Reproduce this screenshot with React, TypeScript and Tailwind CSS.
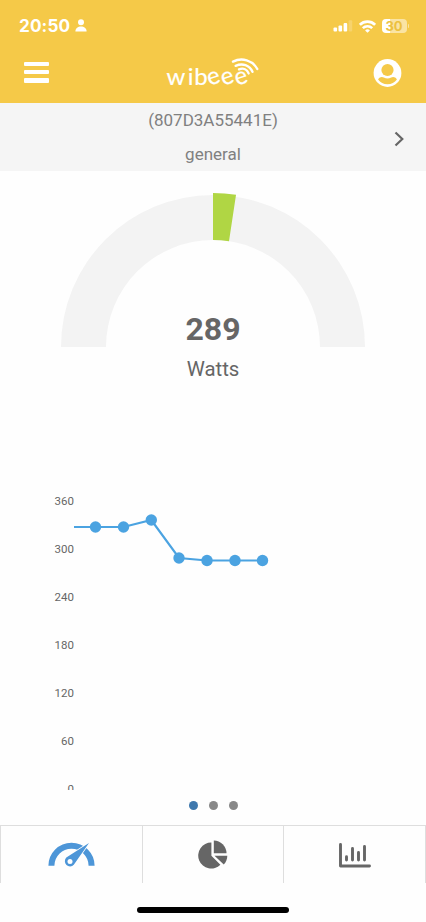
import React, { useState } from 'react';

const GAUGE = { cx: 152, cy: 154, inner: 107 };

const readings = [
  { x: 41.5, y: 37 },
  { x: 69.5, y: 37 },
  { x: 97.3, y: 30 },
  { x: 125, y: 68 },
  { x: 153, y: 70.5 },
  { x: 181, y: 70.5 },
  { x: 208.5, y: 70.5 },
];

const ticks = [360, 300, 240, 180, 120, 60, 0];

// Ring segment, angles in degrees clockwise from the top
const ringSegment = (from: number, to: number, outer: number) => {
  const point = (angle: number, r: number) => {
    const rad = (angle * Math.PI) / 180;
    return `${GAUGE.cx + r * Math.sin(rad)} ${GAUGE.cy - r * Math.cos(rad)}`;
  };
  return `M${point(from, outer)} A${outer} ${outer} 0 0 1 ${point(to, outer)} L${point(to, GAUGE.inner)} A${GAUGE.inner} ${GAUGE.inner} 0 0 0 ${point(from, GAUGE.inner)}Z`;
};

const StatusBar: React.FC = () => (
  <div className="flex h-[52px] items-center justify-between pl-[19px] pr-[17px]">
    <div className="flex items-center gap-[5px]">
      <span className="font-['Inter'] text-[17.2px] font-bold leading-5 tracking-[0.1px]">20:50</span>
      <svg className="mb-px" width="12" height="13" viewBox="0 0 12 13" fill="currentColor">
        <circle cx="6" cy="3.3" r="3" />
        <path d="M0.4 12.4C0.4 9 3 7.4 6 7.4s5.6 1.6 5.6 5z" />
      </svg>
    </div>
    <div className="flex items-center gap-[6px]">
      <svg width="20" height="12" viewBox="0 0 20 12" fill="currentColor">
        <rect x="0.5" y="7.5" width="3.6" height="4" rx="1" />
        <rect x="5.5" y="5.5" width="3.6" height="6" rx="1" />
        <rect x="10.6" y="3" width="3.6" height="8.5" rx="1" />
        <rect x="15.6" y="0.3" width="3.6" height="11.2" rx="1" opacity="0.2" />
      </svg>
      <svg width="17" height="13" viewBox="0 0 17 13" fill="none" stroke="currentColor" strokeWidth="2.6">
        <path d="M0.9 4.8a10.8 10.8 0 0 1 15.2 0" />
        <path d="M3.8 8.1a6.8 6.8 0 0 1 9.4 0" />
        <path d="M8.5 12.8 6.1 10.4a3.5 3.5 0 0 1 4.8 0z" fill="currentColor" stroke="none" />
      </svg>
      <div className="flex items-center gap-px">
        <div className="flex h-[14px] w-[25px] items-center justify-center rounded-[4px] bg-linear-to-r from-white from-30% to-white/50 to-30%">
          <span className="font-['Inter'] text-[13px] font-bold leading-none text-[#ecc13f]">30</span>
        </div>
        <div className="h-[4px] w-[1.5px] rounded-r-full bg-white/50" />
      </div>
    </div>
  </div>
);

const Logo: React.FC = () => (
  <svg className="overflow-visible" width="100" height="36" viewBox="-2 -2 100 36" fill="none" stroke="currentColor">
    <text
      x="3.4 24.8 31.2 46.4 60.2 74"
      y="27.6 27.6 27.6 28.8 28.8 28.8"
      rotate="0 0 0 -18 -18 -18"
      fill="currentColor"
      strokeWidth="0.2"
      className="font-['Lato'] text-[24px]"
    >
      wibeee
    </text>
    <g strokeWidth="2.4" strokeLinecap="round">
      <path d="M70 4.600C79 .2 89.500 3.200 94.300 12" />
      <path d="M72.600 8.800C79.500 5.800 86.500 8 89.500 14.800" />
      <path d="M76 12.400C80.500 10.600 84 12.600 85.600 16.400" />
    </g>
  </svg>
);

const Header: React.FC = () => (
  <header className="h-[103px] bg-[#f5c948] text-white">
    <StatusBar />
    <div className="flex h-[42px] items-center justify-between pl-[24px] pr-[24px]">
      <button className="mb-[2px] flex h-[21px] w-[25px] flex-col justify-between" aria-label="Menu">
        <span className="h-[4.500px] w-full rounded-[1px] bg-white" />
        <span className="h-[4.500px] w-full rounded-[1px] bg-white" />
        <span className="h-[4.500px] w-full rounded-[1px] bg-white" />
      </button>
      <Logo />
      <svg width="29" height="28" viewBox="0 0 28 28">
        <circle cx="14" cy="14" r="13.900" fill="#fff" />
        <circle cx="14" cy="11" r="6.100" fill="#f5c948" />
        <path d="M4.600 20.600C6 18 8.500 17.600 10.300 18.600c2.400 1.300 5 1.300 7.400 0 1.800-1 4.300-.6 5.700 2C21.200 23.800 18 25.300 14 25.300s-7.200-1.500-9.400-4.700z" fill="#f5c948" />
      </svg>
    </div>
  </header>
);

const DeviceBar: React.FC = () => (
  <div className="grid h-[68px] grid-cols-[1fr_auto_1fr] items-center bg-[#f5f5f5] text-[17px] leading-[34px] text-[#808080]">
    <div />
    <div className="text-center">
      <p>(807D3A55441E)</p>
      <p>general</p>
    </div>
    <svg className="mr-[20px] mt-[3px] justify-self-end" width="13" height="18" viewBox="0 0 13 18" fill="none" stroke="#666" strokeWidth="2.200">
      <path d="M2.500 2.500 9.300 9l-6.800 6.500" />
    </svg>
  </div>
);

const Gauge: React.FC = () => (
  <section className="flex flex-col items-center pt-[22px]">
    <div className="grid">
      <svg className="col-start-1 row-start-1" width="304" height="154" viewBox="0 0 304 154">
        <path d={ringSegment(-90, 90, 152)} fill="#f3f3f3" />
        <path d={ringSegment(0, 8.600, 154)} fill="#b0d644" />
      </svg>
      <span className="col-start-1 row-start-1 mb-[-1px] self-end justify-self-center text-[32px] font-bold leading-[38px] text-[#666]">289</span>
    </div>
    <span className="mb-px mt-[9px] text-[20.400px] leading-[26px] text-[#666]">Watts</span>
  </section>
);

const HistoryChart: React.FC = () => (
  <svg className="ml-[54px]" width="320" height="300" viewBox="0 0 320 300">
    <g fill="#666" textAnchor="end" className="text-[11.500px]">
      {ticks.map((tick, i) => (
        <text key={tick} x="20" y={15 + i * 48}>{tick}</text>
      ))}
    </g>
    <polyline
      points={['20,37', ...readings.map(p => `${p.x},${p.y}`)].join(' ')}
      fill="none"
      stroke="#4ba3e1"
      strokeWidth="2.200"
    />
    {readings.map(p => (
      <circle key={p.x} cx={p.x} cy={p.y} r="5.700" fill="#4ba3e1" />
    ))}
  </svg>
);

const GaugeIcon: React.FC = () => (
  <svg width="47" height="26" viewBox="0 0 47 26">
    <path d="M3.400 23.800a20.100 20.100 0 0 1 40.200 0" fill="none" stroke="#4d96d8" strokeWidth="6" />
    <path d="M41 1 25.800 22.800a5 5 0 1 1-7.500-7.200z" fill="#4d96d8" stroke="#fefefe" strokeWidth="1.600" className="[paint-order:stroke]" />
    <circle cx="22" cy="19.600" r="2.500" fill="#fefefe" />
  </svg>
);

const PieIcon: React.FC = () => (
  <svg width="30" height="29" viewBox="0 0 30 29" fill="#666">
    <path d="M13.400 2.600v13.200l9 9A13 13 0 1 1 13.400 2.600z" />
    <path d="M15.800.5A13 13 0 0 1 28.500 13.300H15.800z" />
    <path d="M16.500 15.700h12.800c0 3.400-1.300 6.500-3.500 8.900z" />
  </svg>
);

const BarsIcon: React.FC = () => (
  <svg width="34" height="26" viewBox="0 0 34 26" fill="none" stroke="#666" strokeWidth="2.900" strokeLinecap="round" strokeLinejoin="round">
    <path d="M2.500 2.500v21.500h29" />
    <path d="M8.500 14.700v3.300M14.500 6.500V18M20.500 10.500V18M26.500 4.500V18" />
  </svg>
);

const tabs = [
  { id: 'gauge', icon: <GaugeIcon /> },
  { id: 'pie', icon: <PieIcon /> },
  { id: 'bars', icon: <BarsIcon /> },
];

const App: React.FC = () => {
  const [page, setPage] = useState(0);

  return (
    <div className="flex h-[922px] w-[426px] flex-col overflow-hidden bg-[#fefefe] font-['Roboto',sans-serif]">
      <Header />
      <DeviceBar />
      <Gauge />

      <div className="mt-[107px] flex">
        <HistoryChart />
      </div>

      {/* Page dots */}
      <div className="flex h-[35px] items-center justify-center gap-[11px] pb-[4px]">
        {[0, 1, 2].map(i => (
          <button
            key={i}
            onClick={() => setPage(i)}
            className={`h-[9px] w-[9px] rounded-full ${page === i ? 'bg-[#3e78ad]' : 'bg-[#888]'}`}
          />
        ))}
      </div>

      {/* Bottom tabs */}
      <nav className="grid h-[58px] grid-cols-3 border-r border-t border-[#dedede]">
        {tabs.map(tab => (
          <button key={tab.id} className="flex items-center justify-center border-l border-[#dedede]">
            {tab.icon}
          </button>
        ))}
      </nav>

      <div className="mx-auto mt-[24px] h-[6px] w-[152px] rounded-full bg-black" />
    </div>
  );
};

export default App;
